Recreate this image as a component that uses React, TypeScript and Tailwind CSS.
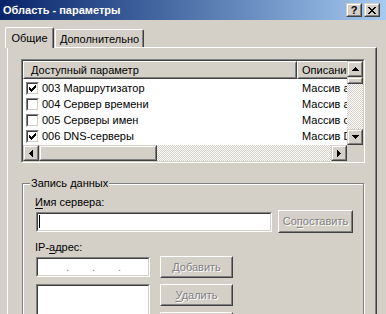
import React from 'react';

// classic 3D edges
const sunkenOuter = 'border border-t-[#808080] border-l-[#808080] border-r-white border-b-white';
const sunkenInner = 'border border-t-[#404040] border-l-[#404040] border-r-[#d4d0c8] border-b-[#d4d0c8]';
const raisedOuter = 'border border-t-white border-l-white border-r-[#404040] border-b-[#404040]';
const raisedInner = 'border border-t-[#d4d0c8] border-l-[#d4d0c8] border-r-[#808080] border-b-[#808080]';
const scrollOuter = 'border border-t-[#d4d0c8] border-l-[#d4d0c8] border-r-[#404040] border-b-[#404040]';
const scrollInner = 'border border-t-white border-l-white border-r-[#808080] border-b-[#808080]';
const dither = '[background-image:repeating-conic-gradient(#d4d0c8_0%_25%,#ffffff_0%_50%)] [background-size:2px_2px]';

type Dir = 'up' | 'down' | 'left' | 'right';

const arrowPaths: Record<Dir, { w: number; h: number; d: string }> = {
  up: { w: 7, h: 4, d: 'M3 0h1v1H3z M2 1h3v1H2z M1 2h5v1H1z M0 3h7v1H0z' },
  down: { w: 7, h: 4, d: 'M0 0h7v1H0z M1 1h5v1H1z M2 2h3v1H2z M3 3h1v1H3z' },
  left: { w: 4, h: 7, d: 'M3 0h1v7H3z M2 1h1v5H2z M1 2h1v3H1z M0 3h1v1H0z' },
  right: { w: 4, h: 7, d: 'M0 0h1v7H0z M1 1h1v5H1z M2 2h1v3H2z M3 3h1v1H3z' },
};

const ScrollButton = ({ dir }: { dir: Dir }) => {
  const a = arrowPaths[dir];
  return (
    <div className={`${scrollOuter} w-[16px] h-[16px] flex-none bg-[#d4d0c8]`}>
      <div className={`${scrollInner} w-full h-full flex items-center justify-center`}>
        <svg width={a.w} height={a.h} viewBox={`0 0 ${a.w} ${a.h}`} shapeRendering="crispEdges">
          <path d={a.d} fill="#000" />
        </svg>
      </div>
    </div>
  );
};

const Checkbox = ({ checked }: { checked: boolean }) => (
  <div className={`${sunkenOuter} w-[13px] h-[13px] flex-none`}>
    <div className={`${sunkenInner} w-full h-full bg-white flex items-center justify-center`}>
      {checked && (
        <svg width="7" height="7" viewBox="0 0 7 7" shapeRendering="crispEdges">
          <path
            d="M0 2h1v3H0z M1 3h1v3H1z M2 4h1v3H2z M3 3h1v3H3z M4 2h1v3H4z M5 1h1v3H5z M6 0h1v3H6z"
            fill="#000"
          />
        </svg>
      )}
    </div>
  </div>
);

interface ButtonProps {
  pre: string;
  u: string;
  post: string;
  className: string;
}

const DisabledButton = ({ pre, u, post, className }: ButtonProps) => (
  <div className={`${raisedOuter} ${className} flex-none`}>
    <div className={`${raisedInner} w-full h-full flex items-center justify-center text-[#808080] [text-shadow:1px_1px_0_#ffffff]`}>
      <span>
        {pre}
        <span className="underline underline-offset-[2px]">{u}</span>
        {post}
      </span>
    </div>
  </div>
);

const rows = [
  { checked: true, name: '003 Маршрутизатор', desc: 'Массив адресов маршрутизаторов' },
  { checked: false, name: '004 Сервер времени', desc: 'Массив адресов серверов времени' },
  { checked: false, name: '005 Серверы имен', desc: 'Массив серверов имен' },
  { checked: true, name: '006 DNS-серверы', desc: 'Массив DNS-серверов' },
];

export default function App() {
  return (
    <div className="w-[386px] h-[314px] overflow-hidden bg-[#d4d0c8] text-black text-[11px] leading-[13px] font-['Liberation_Sans',Arial,sans-serif]">
      {/* title bar */}
      <div className="h-[20px] flex items-center justify-between pl-[3px] pr-[6px] bg-gradient-to-r from-[#0a246a] to-[#a6caf0]">
        <span className="text-white font-bold">Область - параметры</span>
        <div className="flex gap-[2px]">
          <div className={`${scrollOuter} w-[16px] h-[14px] bg-[#d4d0c8]`}>
            <div className={`${scrollInner} w-full h-full flex items-center justify-center font-bold text-[11px] leading-none`}>?</div>
          </div>
          <div className={`${scrollOuter} w-[16px] h-[14px] bg-[#d4d0c8]`}>
            <div className={`${scrollInner} w-full h-full flex items-center justify-center`}>
              <svg width="8" height="7" viewBox="0 0 8 7" shapeRendering="crispEdges">
                <path
                  d="M0 0h2v1H0z M6 0h2v1H6z M1 1h2v1H1z M5 1h2v1H5z M2 2h4v1H2z M3 3h2v1H3z M2 4h4v1H2z M1 5h2v1H1z M5 5h2v1H5z M0 6h2v1H0z M6 6h2v1H6z"
                  fill="#000"
                />
              </svg>
            </div>
          </div>
        </div>
      </div>

      <div className="pt-[7px] px-[5px]">
        {/* tabs */}
        <div className="flex items-end h-[20px]">
          <div className="relative z-10 -mb-[1px] w-[49px] h-[21px] flex items-center justify-center bg-[#d4d0c8] border-t border-l border-r border-t-white border-l-white border-r-[#404040] rounded-t-[2px] shadow-[inset_-1px_0_0_#808080]">
            Общие
          </div>
          <div className="ml-[1px] w-[89px] h-[18px] flex items-center justify-center pt-[1px] border-t border-l border-r border-t-white border-l-white border-r-[#404040] rounded-t-[2px] shadow-[inset_-1px_0_0_#808080]">
            Дополнительно
          </div>
        </div>

        {/* tab panel */}
        <div className="ml-[2px] w-[370px] h-[300px] border-t border-l border-r border-t-white border-l-white border-r-[#404040] shadow-[inset_-1px_0_0_#808080] pt-[11px] pl-[13px]">
          {/* list view */}
          <div className={`${sunkenOuter} w-[344px] h-[104px]`}>
            <div className={`${sunkenInner} w-full h-full flex flex-col bg-white`}>
              <div className="flex h-[84px]">
                <div className="w-[324px] flex flex-col overflow-hidden">
                  <div className="flex h-[18px] flex-none bg-[#d4d0c8] overflow-hidden">
                    <div className={`${raisedOuter} w-[274px] h-full flex-none`}>
                      <div className={`${raisedInner} h-full flex items-center pl-[6px]`}>Доступный параметр</div>
                    </div>
                    <div className={`${raisedOuter} w-[50px] h-full flex-none border-r-0`}>
                      <div className={`${raisedInner} h-full flex items-center pl-[3px] whitespace-nowrap overflow-hidden border-r-0`}>Описание</div>
                    </div>
                  </div>
                  <div className="pt-[1px]">
                    {rows.map(r => (
                      <div key={r.name} className="flex h-[16px] items-center whitespace-nowrap">
                        <div className="w-[274px] flex-none flex items-center gap-[3px] pl-[3px]">
                          <Checkbox checked={r.checked} />
                          <span>{r.name}</span>
                        </div>
                        <div className="w-[50px] flex-none overflow-hidden pl-[5px]">{r.desc}</div>
                      </div>
                    ))}
                  </div>
                </div>
                <div className="w-[16px] flex flex-col">
                  <ScrollButton dir="up" />
                  <div className={`${scrollOuter} h-[7px] bg-[#d4d0c8]`}>
                    <div className={`${scrollInner} h-full`} />
                  </div>
                  <div className={`flex-1 ${dither}`} />
                  <ScrollButton dir="down" />
                </div>
              </div>
              <div className="flex h-[16px]">
                <div className="w-[324px] flex">
                  <ScrollButton dir="left" />
                  <div className={`${scrollOuter} w-[118px] h-full bg-[#d4d0c8]`}>
                    <div className={`${scrollInner} h-full`} />
                  </div>
                  <div className={`flex-1 ${dither}`} />
                  <ScrollButton dir="right" />
                </div>
                <div className="w-[16px] bg-[#d4d0c8]" />
              </div>
            </div>
          </div>

          {/* group box */}
          <div className="relative mt-[20px] ml-[1px] w-[342px] h-[140px] border border-[#808080] shadow-[inset_1px_1px_0_#ffffff,1px_1px_0_#ffffff] pt-[12px] pl-[12px]">
            <span className="absolute left-[7px] -top-[7px] bg-[#d4d0c8] px-[1px]">Запись данных</span>
            <div>
              <span className="underline underline-offset-[2px]">И</span>мя сервера:
            </div>
            <div className="mt-[1px] flex items-center gap-[6px]">
              <div className={`${sunkenOuter} ml-[1px] w-[236px] h-[20px]`}>
                <div className={`${sunkenInner} w-full h-full bg-white flex items-center pl-[1px]`}>
                  <div className="w-[1px] h-[13px] bg-black" />
                </div>
              </div>
              <DisabledButton pre="Со" u="п" post="оставить" className="w-[75px] h-[23px]" />
            </div>
            <div className="mt-[8px]">
              IP-<span className="underline underline-offset-[2px]">а</span>дрес:
            </div>
            <div className="mt-[2px] ml-[1px] flex gap-[10px]">
              <div className="pt-[1px] flex flex-col gap-[7px]">
                <div className={`${sunkenOuter} w-[114px] h-[20px]`}>
                  <div className={`${sunkenInner} w-full h-full bg-white flex items-center pl-[28px] gap-[23px] text-[#808080]`}>
                    <span className="w-[3px] text-center">.</span>
                    <span className="w-[3px] text-center">.</span>
                    <span className="w-[3px] text-center">.</span>
                  </div>
                </div>
                <div className={`${sunkenOuter} w-[114px] h-[60px]`}>
                  <div className={`${sunkenInner} w-full h-full bg-white`} />
                </div>
              </div>
              <div className="flex flex-col gap-[6px]">
                <DisabledButton pre="" u="Д" post="обавить" className="w-[73px] h-[22px]" />
                <DisabledButton pre="" u="У" post="далить" className="w-[73px] h-[22px]" />
                <DisabledButton pre="" u="В" post="верх" className="w-[73px] h-[22px]" />
              </div>
            </div>
          </div>
        </div>
      </div>
    </div>
  );
}
